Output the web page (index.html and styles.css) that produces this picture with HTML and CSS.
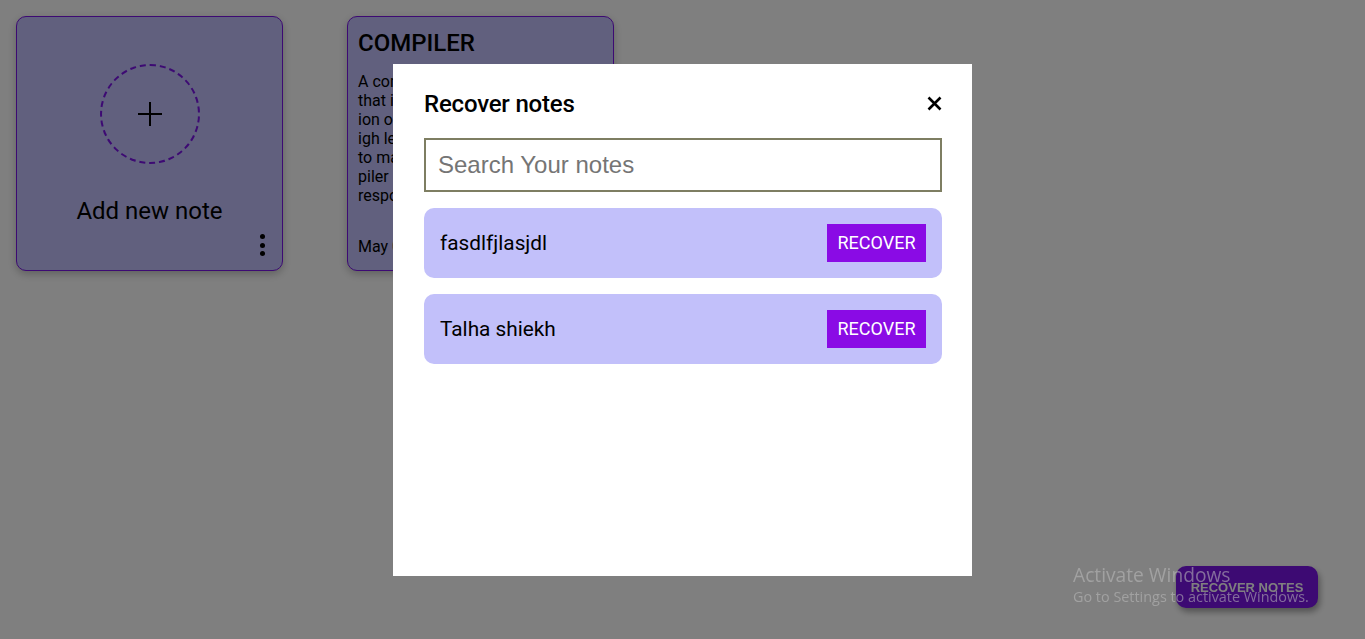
FILE: index.html
```html
<!DOCTYPE html>
<html>
<head>
<meta charset="utf-8">
<link rel="stylesheet" href="styles.css">
</head>
<body>
<main class="notes">
  <div class="card add-card">
    <div class="add-circle">
      <svg width="26" height="26" viewBox="0 0 26 26"><path d="M13 1v24M1 13h24" stroke="#000" stroke-width="2" fill="none"/></svg>
    </div>
    <div class="add-label">Add new note</div>
    <div class="dots"><span></span><span></span><span></span></div>
  </div>
  <div class="card note-card">
    <h2 class="note-title">COMPILER</h2>
    <p class="note-body">A compiler is a special prog
that is used for the translat
ion of source code from a h
igh level language such as C
to machine code. The com
piler program is also
responsible for checks.</p>
    <div class="note-date">May 05, 2023</div>
  </div>
</main>

<button class="recover-fab">RECOVER NOTES</button>

<div class="overlay">
  <div class="modal">
    <div class="modal-head">
      <h3 class="modal-title">Recover notes</h3>
      <span class="close">
        <svg width="15" height="15" viewBox="0 0 15 15"><path d="M1.5 1.5l12 12M13.5 1.5l-12 12" stroke="#000" stroke-width="2.6" fill="none"/></svg>
      </span>
    </div>
    <input class="search" type="text" placeholder="Search Your notes">
    <ul class="list">
      <li class="item"><span class="item-name">fasdlfjlasjdl</span><button class="recover-btn">RECOVER</button></li>
      <li class="item"><span class="item-name">Talha shiekh</span><button class="recover-btn">RECOVER</button></li>
    </ul>
  </div>
</div>

<div class="watermark">
  <div class="wm-title">Activate Windows</div>
  <div class="wm-sub">Go to Settings to activate Windows.</div>
</div>
</body>
</html>
```
FILE: styles.css
```css
* { box-sizing: border-box; }
html, body { margin: 0; height: 100%; }
body {
  background: #fff;
  font-family: Roboto, "Liberation Sans", sans-serif;
  color: #000;
  overflow: hidden;
}
.notes {
  display: flex;
  gap: 64px;
  padding: 16px;
}
.card {
  width: 267px;
  height: 255px;
  background: #c2c0fc;
  border: 1px solid #7a14e6;
  border-radius: 10px;
  box-shadow: 0 3px 8px rgba(0,0,0,0.25);
  position: relative;
  overflow: hidden;
}
.add-card {
  display: flex;
  flex-direction: column;
  align-items: center;
  padding-top: 47px;
}
.add-circle {
  width: 100px;
  height: 100px;
  border: 2px dashed #7a14e6;
  border-radius: 50%;
  display: flex;
  align-items: center;
  justify-content: center;
}
.add-label {
  margin-top: 33px;
  font-size: 24px;
  line-height: 28px;
}
.dots {
  position: absolute;
  right: 17px;
  bottom: 14px;
  display: flex;
  flex-direction: column;
  gap: 3.5px;
}
.dots span {
  width: 5px;
  height: 5px;
  background: #000;
  border-radius: 50%;
}
.note-card {
  padding: 12px 10px 10px 10px;
  display: flex;
  flex-direction: column;
}
.note-title {
  margin: 0;
  font-size: 24px;
  font-weight: 500;
  line-height: 28px;
}
.note-body {
  margin: 15px 0 0;
  font-size: 16px;
  line-height: 19px;
  white-space: pre-line;
}
.note-date {
  margin-top: auto;
  font-size: 16px;
  line-height: 19px;
  padding-bottom: 4px;
}
.recover-fab {
  position: fixed;
  right: 47px;
  bottom: 31px;
  width: 142px;
  height: 42px;
  border: none;
  border-radius: 10px;
  background: #7a14e6;
  color: #fff;
  font-family: "Liberation Sans", sans-serif;
  font-weight: bold;
  font-size: 13px;
  box-shadow: 2px 4px 6px rgba(0,0,0,0.35);
}
.overlay {
  position: fixed;
  inset: 0;
  background: rgba(0,0,0,0.5);
  display: flex;
  align-items: center;
  justify-content: center;
}
.modal {
  width: 579px;
  height: 512px;
  background: #fff;
  padding: 26px 30px 0 31px;
}
.modal-head {
  display: flex;
  justify-content: space-between;
  align-items: center;
  height: 28px;
}
.modal-title {
  margin: 0;
  font-size: 24px;
  font-weight: 500;
  line-height: 28px;
  letter-spacing: -0.2px;
}
.close {
  display: flex;
}
.search {
  display: block;
  margin-top: 20px;
  width: 518px;
  height: 54px;
  border: 2px solid #7e7e62;
  padding: 0 12px;
  font-family: "Liberation Sans", Arial, sans-serif;
  font-size: 24px;
  outline: none;
}
.search::placeholder { color: #757575; }
.list {
  list-style: none;
  margin: 16px 0 0;
  padding: 0;
  display: flex;
  flex-direction: column;
  gap: 16px;
  width: 518px;
}
.item {
  height: 70px;
  background: #c2c0fa;
  border-radius: 10px;
  display: flex;
  align-items: center;
  justify-content: space-between;
  padding: 0 16px;
}
.item-name {
  font-size: 20.8px;
}
.recover-btn {
  width: 99px;
  height: 38px;
  border: none;
  background: #8a0be5;
  color: #fff;
  font-family: Roboto, sans-serif;
  font-size: 18px;
  padding: 0;
}
.watermark {
  position: fixed;
  left: 1073px;
  top: 563px;
  color: rgba(190,190,190,0.55);
  font-family: "Open Sans", sans-serif;
  pointer-events: none;
}
.wm-title { font-size: 19.2px; line-height: 24px; }
.wm-sub { font-size: 14.4px; line-height: 19px; }
```
